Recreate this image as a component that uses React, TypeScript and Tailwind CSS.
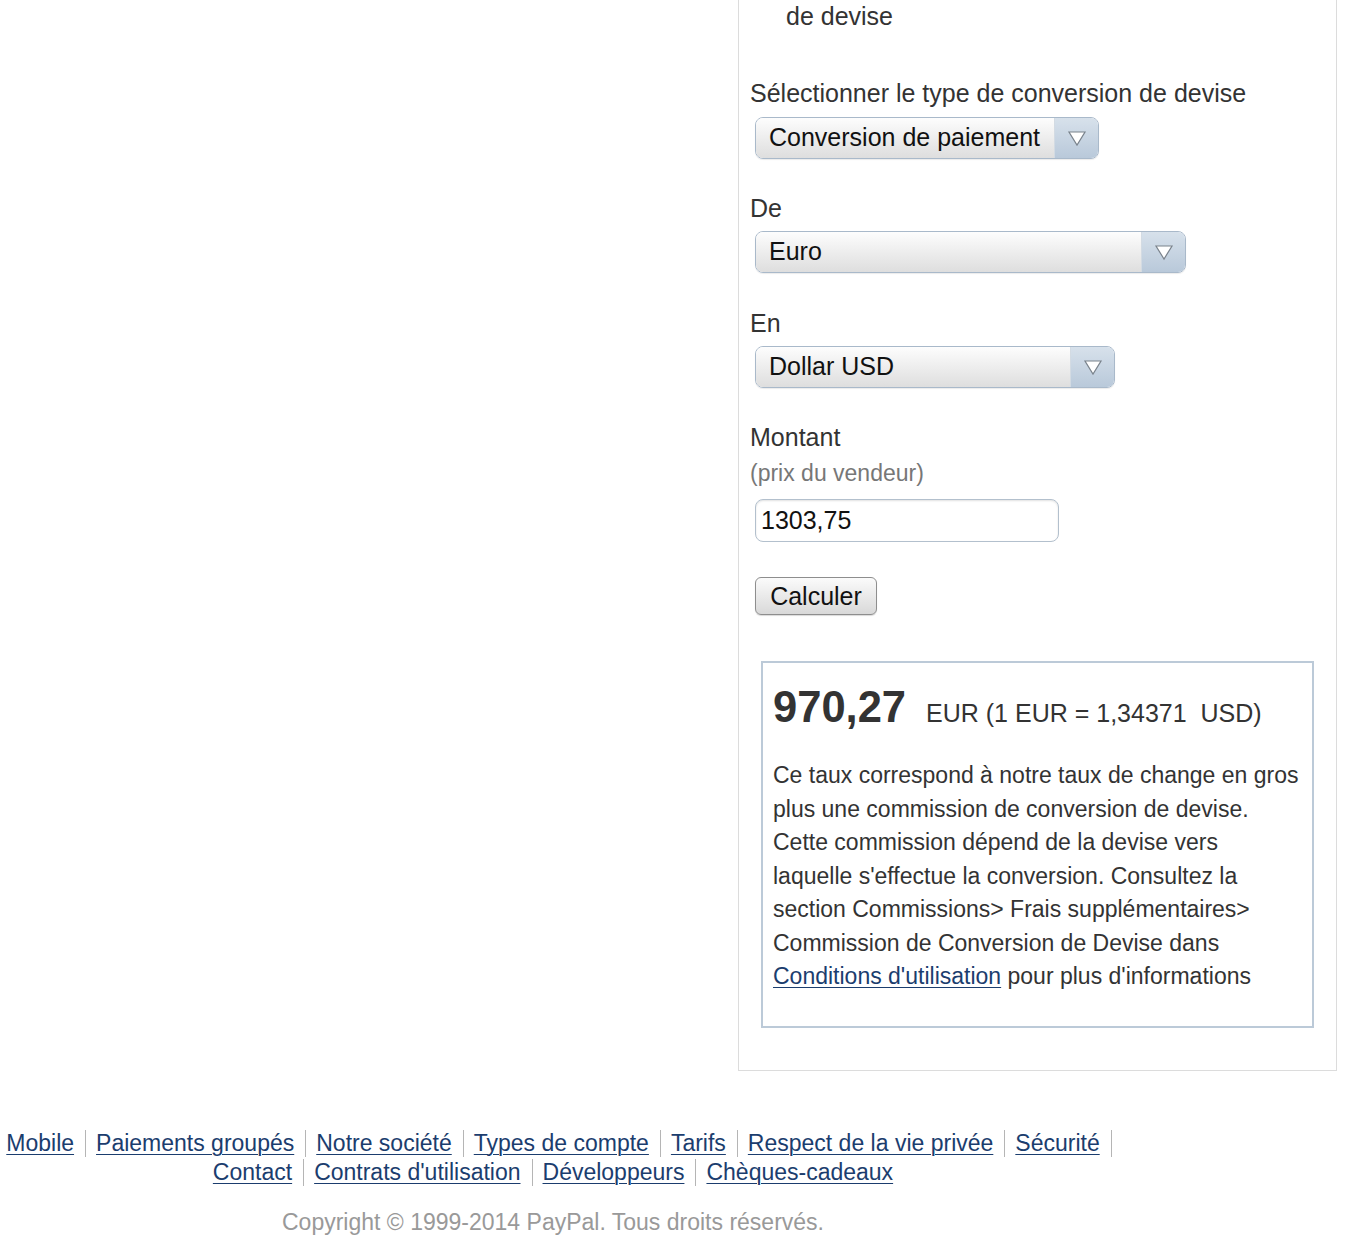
import React from "react";

const font = { fontFamily: '"Liberation Sans", Arial, Helvetica, sans-serif' };

function Arrow() {
  return (
    <svg width="20" height="18" viewBox="0 0 20 18">
      <path d="M2 3 L18 3 L10 16 Z" fill="#ffffff" stroke="#7a838c" strokeWidth="1.2" strokeLinejoin="miter" />
    </svg>
  );
}

function Select({ label, width }: { label: string; width: string }) {
  return (
    <div
      className={`ml-[5px] flex h-[42px] ${width} overflow-hidden rounded-[8px] border border-[#a9b9ca] shadow-[0_1px_1px_rgba(0,0,0,0.08)]`}
    >
      <div className="flex flex-1 items-center bg-gradient-to-b from-[#fdfdfd] to-[#dedede] pl-[13px] text-[25px] text-[#111]">
        {label}
      </div>
      <div className="flex w-[44px] items-center justify-center border-l border-[#d3dbe3] bg-gradient-to-b from-[#d7e1eb] to-[#b9c9da]">
        <Arrow />
      </div>
    </div>
  );
}

function Sep({ last }: { last?: boolean }) {
  return (
    <span
      className={`ml-[11px] inline-block h-[27px] w-px align-[-6px] bg-[#b5b5b5] ${last ? "mr-[-12px]" : "mr-[10px]"}`}
    />
  );
}

function FLink({ children }: { children: React.ReactNode }) {
  return <a className="text-[#1b3d6e] underline decoration-1 underline-offset-[3px]">{children}</a>;
}

export default function App() {
  return (
    <div className="min-h-[1245px] w-[1362px] bg-white text-[#333]" style={font}>
      <div className="flex">
        <div className="w-[738px]" />
        <div className="w-[599px] border-x border-b border-[#dcdcdc] pb-[42px] pl-[11px] pt-[2px]">
          <div className="pl-[36px] text-[25px] leading-[28px]">de devise</div>

          <div className="mt-[49px] text-[25px] leading-[28px]">Sélectionner le type de conversion de devise</div>
          <div className="mt-[10px]">
            <Select label="Conversion de paiement" width="w-[344px]" />
          </div>

          <div className="mt-[35px] text-[25px] leading-[28px]">De</div>
          <div className="mt-[9px]">
            <Select label="Euro" width="w-[431px]" />
          </div>

          <div className="mt-[36px] text-[25px] leading-[28px]">En</div>
          <div className="mt-[9px]">
            <Select label="Dollar USD" width="w-[360px]" />
          </div>

          <div className="mt-[35px] text-[25px] leading-[28px]">Montant</div>
          <div className="mt-[8px] text-[23px] leading-[28px] text-[#777]">(prix du vendeur)</div>
          <div className="mt-[12px] ml-[5px] flex h-[43px] w-[304px] items-center rounded-[8px] border border-[#b3c0cd] bg-white pl-[5px] text-[25px] text-[#111] shadow-[inset_0_1px_2px_rgba(0,0,0,0.12)]">
            1303,75
          </div>

          <div className="mt-[35px] ml-[5px] flex">
            <button className="h-[38px] w-[122px] rounded-[6px] border border-[#8e8e8e] bg-gradient-to-b from-[#fbfbfb] to-[#d9d9d9] text-[25px] text-[#111] shadow-[0_1px_1px_rgba(0,0,0,0.15)]">
              Calculer
            </button>
          </div>

          <div className="mt-[46px] ml-[11px] w-[553px] border-2 border-[#bccad8] pb-[32px] pl-[10px] pr-[12px] pt-[18px]">
            <div className="flex items-baseline">
              <span className="text-[43.5px] font-bold leading-[52px] text-[#333]">970,27</span>
              <span className="ml-[20px] text-[25px]">EUR (1 EUR = 1,34371&nbsp; USD)</span>
            </div>
            <p className="mt-[26px] text-[23px] leading-[33.5px] text-[#333]">
              Ce taux correspond à notre taux de change en gros plus une commission de conversion de devise. Cette commission dépend de la devise vers laquelle s'effectue la conversion. Consultez la section Commissions&gt; Frais supplémentaires&gt; Commission de Conversion de Devise dans{" "}
              <a className="text-[#1b3d6e] underline decoration-1 underline-offset-[3px]">Conditions d'utilisation</a> pour plus d'informations
            </p>
          </div>
        </div>
      </div>

      <div className="mt-[58px] w-[1106px] text-center text-[23px] leading-[29px]">
        <div className="h-[29px] whitespace-nowrap">
          <FLink>Mobile</FLink>
          <Sep />
          <FLink>Paiements groupés</FLink>
          <Sep />
          <FLink>Notre société</FLink>
          <Sep />
          <FLink>Types de compte</FLink>
          <Sep />
          <FLink>Tarifs</FLink>
          <Sep />
          <FLink>Respect de la vie privée</FLink>
          <Sep />
          <FLink>Sécurité</FLink>
          <Sep last />
        </div>
        <div className="h-[29px] whitespace-nowrap">
          <FLink>Contact</FLink>
          <Sep />
          <FLink>Contrats d'utilisation</FLink>
          <Sep />
          <FLink>Développeurs</FLink>
          <Sep />
          <FLink>Chèques-cadeaux</FLink>
        </div>
        <div className="mt-[21px] text-[#999]">Copyright © 1999-2014 PayPal. Tous droits réservés.</div>
      </div>
    </div>
  );
}
